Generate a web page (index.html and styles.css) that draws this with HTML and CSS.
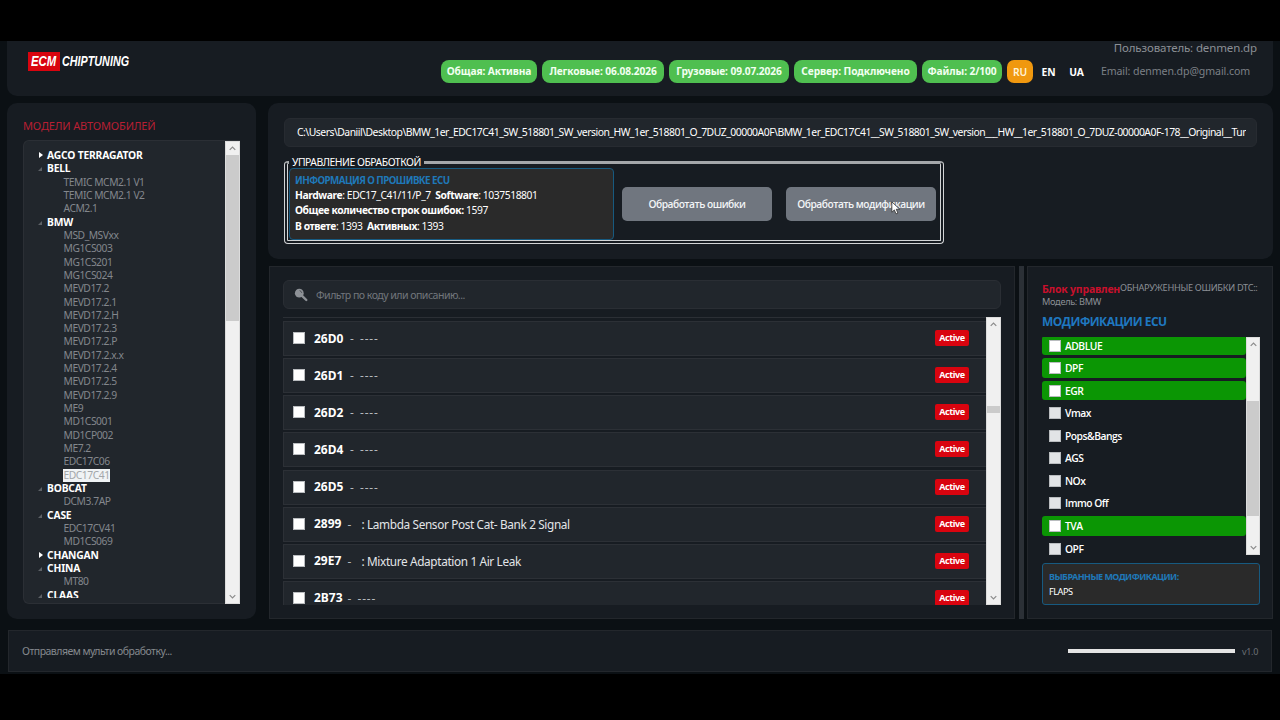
FILE: index.html
```html
<!DOCTYPE html>
<html lang="ru">
<head>
<meta charset="utf-8">
<title>ECM Chiptuning</title>
<link rel="stylesheet" href="styles.css">
</head>
<body>
<div class="app">
  <header class="header">
    <div class="logo"><span class="logo-ecm"><span>ECM</span></span><span class="logo-chip">CHIPTUNING</span></div>
    <div class="badges">
      <span class="badge b1"><span>Общая: Активна</span></span>
      <span class="badge b2"><span>Легковые: 06.08.2026</span></span>
      <span class="badge b3"><span>Грузовые: 09.07.2026</span></span>
      <span class="badge b4"><span>Сервер: Подключено</span></span>
      <span class="badge b5"><span>Файлы: 2/100</span></span>
      <span class="lang lang-on">RU</span>
      <span class="lang">EN</span>
      <span class="lang">UA</span>
    </div>
    <div class="user"><div class="user-name">Пользователь: denmen.dp</div><div class="user-mail">Email: denmen.dp@gmail.com</div></div>
  </header>
  <div class="body">
    <aside class="sidebar">
      <h2 class="side-title"><span>МОДЕЛИ АВТОМОБИЛЕЙ</span></h2>
      <div class="tree">
        <div class="tree-list">
          <div class="brand closed"><span>AGCO TERRAGATOR</span></div>
          <div class="brand"><span>BELL</span></div>
          <div class="model"><span>TEMIC MCM2.1 V1</span></div>
          <div class="model"><span>TEMIC MCM2.1 V2</span></div>
          <div class="model"><span>ACM2.1</span></div>
          <div class="brand"><span>BMW</span></div>
          <div class="model"><span>MSD_MSVxx</span></div>
          <div class="model"><span>MG1CS003</span></div>
          <div class="model"><span>MG1CS201</span></div>
          <div class="model"><span>MG1CS024</span></div>
          <div class="model"><span>MEVD17.2</span></div>
          <div class="model"><span>MEVD17.2.1</span></div>
          <div class="model"><span>MEVD17.2.H</span></div>
          <div class="model"><span>MEVD17.2.3</span></div>
          <div class="model"><span>MEVD17.2.P</span></div>
          <div class="model"><span>MEVD17.2.x.x</span></div>
          <div class="model"><span>MEVD17.2.4</span></div>
          <div class="model"><span>MEVD17.2.5</span></div>
          <div class="model"><span>MEVD17.2.9</span></div>
          <div class="model"><span>ME9</span></div>
          <div class="model"><span>MD1CS001</span></div>
          <div class="model"><span>MD1CP002</span></div>
          <div class="model"><span>ME7.2</span></div>
          <div class="model"><span>EDC17C06</span></div>
          <div class="model selected"><span>EDC17C41</span></div>
          <div class="brand"><span>BOBCAT</span></div>
          <div class="model"><span>DCM3.7AP</span></div>
          <div class="brand"><span>CASE</span></div>
          <div class="model"><span>EDC17CV41</span></div>
          <div class="model"><span>MD1CS069</span></div>
          <div class="brand closed"><span>CHANGAN</span></div>
          <div class="brand"><span>CHINA</span></div>
          <div class="model"><span>MT80</span></div>
          <div class="brand"><span>CLAAS</span></div>
        </div>
        <div class="scroll scroll-tree">
          <svg class="arrow" viewBox="0 0 14 14"><path d="M4 8.5 7 5.5 10 8.5"/></svg>
          <div class="thumb"></div>
          <svg class="arrow arrow-end" viewBox="0 0 14 14"><path d="M4 5.5 7 8.5 10 5.5"/></svg>
        </div>
      </div>
    </aside>
    <div class="content">
      <section class="control">
        <div class="path"><span>C:\Users\Daniil\Desktop\BMW_1er_EDC17C41_SW_518801_SW_version_HW_1er_518801_O_7DUZ_00000A0F\BMW_1er_EDC17C41__SW_518801_SW_version___HW__1er_518801_O_7DUZ-00000A0F-178__Original__Tun</span></div>
        <div class="group">
          <div class="group-title">УПРАВЛЕНИЕ ОБРАБОТКОЙ</div>
          <div class="ecu">
            <div class="ecu-title">ИНФОРМАЦИЯ О ПРОШИВКЕ ECU</div>
            <div class="ecu-line"><b>Hardware</b>: EDC17_C41/11/P_7 &nbsp;<b>Software</b>: 1037518801</div>
            <div class="ecu-line"><b>Общее количество строк ошибок:</b> 1597</div>
            <div class="ecu-line"><b>В ответе</b>: 1393 &nbsp;<b>Активных</b>: 1393</div>
          </div>
          <div class="btn">Обработать ошибки</div>
          <div class="btn btn-mod">Обработать модификации
            <svg class="cursor" viewBox="0 0 12 18"><path d="M1 1v12.5l3-2.8 2 4.8 2.3-1-2-4.6h4.2z"/></svg>
          </div>
        </div>
      </section>
      <div class="lower">
        <section class="errors">
          <div class="search">
            <svg class="lens" viewBox="0 0 14 14"><circle cx="5.3" cy="5.2" r="4.4"/><path d="M8.3 8.2 12.3 12"/><path class="glint" d="M6 2.7a2.5 2.5 0 0 1 1.7 1.8"/></svg>
            <span>Фильтр по коду или описанию...</span>
          </div>
          <div class="err-box">
            <div class="err-list">
              <div class="err"><i class="cb"></i><b>26D0</b><span class="dash">-&nbsp; <span class="dashes">----</span></span><em>Active</em></div>
              <div class="err"><i class="cb"></i><b>26D1</b><span class="dash">-&nbsp; <span class="dashes">----</span></span><em>Active</em></div>
              <div class="err"><i class="cb"></i><b>26D2</b><span class="dash">-&nbsp; <span class="dashes">----</span></span><em>Active</em></div>
              <div class="err"><i class="cb"></i><b>26D4</b><span class="dash">-&nbsp; <span class="dashes">----</span></span><em>Active</em></div>
              <div class="err"><i class="cb"></i><b>26D5</b><span class="dash">-&nbsp; <span class="dashes">----</span></span><em>Active</em></div>
              <div class="err"><i class="cb"></i><b class="near">2899</b><span class="dash">-</span><span class="desc">: Lambda Sensor Post Cat- Bank 2 Signal</span><em>Active</em></div>
              <div class="err"><i class="cb"></i><b class="near">29E7</b><span class="dash">-</span><span class="desc">: Mixture Adaptation 1 Air Leak</span><em>Active</em></div>
              <div class="err"><i class="cb"></i><b class="near">2B73</b><span class="dash">-&nbsp; <span class="dashes">----</span></span><em>Active</em></div>
            </div>
            <div class="scroll scroll-err">
              <svg class="arrow" viewBox="0 0 14 14"><path d="M4 8.5 7 5.5 10 8.5"/></svg>
              <div class="thumb"></div>
              <svg class="arrow arrow-end" viewBox="0 0 14 14"><path d="M4 5.5 7 8.5 10 5.5"/></svg>
            </div>
          </div>
        </section>
        <div class="splitter"></div>
        <section class="mods">
          <div class="mods-head"><div class="block">Блок управлен</div><div class="found">ОБНАРУЖЕННЫЕ ОШИБКИ DTC::</div></div>
          <div class="car">Модель: BMW</div>
          <h3 class="mods-title">МОДИФИКАЦИИ ECU</h3>
          <div class="mod-box">
            <div class="mod-list">
              <div class="mod on"><i class="cb"></i>ADBLUE</div>
              <div class="mod on"><i class="cb"></i>DPF</div>
              <div class="mod on"><i class="cb"></i>EGR</div>
              <div class="mod"><i class="cb"></i>Vmax</div>
              <div class="mod"><i class="cb"></i>Pops&amp;Bangs</div>
              <div class="mod"><i class="cb"></i>AGS</div>
              <div class="mod"><i class="cb"></i>NOx</div>
              <div class="mod"><i class="cb"></i>Immo Off</div>
              <div class="mod on"><i class="cb"></i>TVA</div>
              <div class="mod"><i class="cb"></i>OPF</div>
            </div>
            <div class="scroll scroll-mod">
              <svg class="arrow" viewBox="0 0 14 14"><path d="M4 8.5 7 5.5 10 8.5"/></svg>
              <div class="thumb"></div>
              <svg class="arrow arrow-end" viewBox="0 0 14 14"><path d="M4 5.5 7 8.5 10 5.5"/></svg>
            </div>
          </div>
          <div class="chosen"><div class="chosen-title">ВЫБРАННЫЕ МОДИФИКАЦИИ:</div><div class="chosen-val">FLAPS</div></div>
        </section>
      </div>
    </div>
  </div>
  <footer class="footer"><span class="status">Отправляем мульти обработку...</span><div class="progress"></div><span class="ver">v1.0</span></footer>
</div>
</body>
</html>
```
FILE: styles.css
```css
* { box-sizing: border-box; }
body { margin: 0; padding: 41px 0 46px; width: 1280px; height: 720px; overflow: hidden; background: #000; color: #fff; font-family: "Noto Sans", "Open Sans", sans-serif; font-size: 10.5px; white-space: nowrap; }
.app { height: 633px; background: #0b1014; display: flex; flex-direction: column; padding: 0 7px; }
h2, h3 { margin: 0; font-weight: 400; }

.header { height: 55px; background: #171c22; border-radius: 0 0 10px 10px; display: flex; position: relative; }
.logo { display: flex; margin: 11px 0 0 21px; width: 413px; height: 19px; font: italic bold 14px/19px "Liberation Sans", sans-serif; }
.logo-ecm { width: 32px; background: #d9040f; padding-left: 3px; }
.logo-ecm span { display: block; transform: scaleX(.81); transform-origin: 0 0; }
.logo-chip { padding-left: 2px; transform: scaleX(.77); transform-origin: 2px 0; }
.badges { display: flex; gap: 5px; margin-top: 19px; height: 23px; }
.badge { display: flex; align-items: center; justify-content: center; background: #4fbf50; border-radius: 8px; font-weight: 700; font-size: 10.2px; letter-spacing: -.1px; line-height: 14px; padding-bottom: 1px; color: #f2fff0; }
.b1 { width: 96px; } .b2 { width: 122px; } .b3 { width: 120px; } .b4 { width: 123px; } .b5 { width: 80px; }
.lang { font-weight: 700; font-size: 10.3px; line-height: 25px; width: 23px; text-align: center; letter-spacing: -.1px; }
.lang + .lang { margin-left: -1px; }
.lang-on + .lang { margin-right: 1px; }
.lang-on { width: 26px; background: #f0980f; border-radius: 7px; color: #fff3d8; font-weight: 600; }
.user { position: absolute; right: 16px; top: -2px; text-align: right; color: #8b8f95; }
.user-name { font-size: 11.5px; line-height: 17px; letter-spacing: -.13px; }
.user-mail { font-size: 10.6px; line-height: 16px; margin: 7px 7px 0 0; color: #7c8086; letter-spacing: -.1px; }

.body { display: flex; gap: 12px; margin-top: 7px; height: 516px; }
.sidebar { width: 249px; background: #171c22; border-radius: 10px; padding: 15px 16px 0 16px; }
.side-title { color: #b81f33; font-size: 11px; line-height: 16px; letter-spacing: -.15px; }
.tree { margin-top: 6px; height: 464px; background: #21262c; border: 1px solid #2b2f35; border-right: 0; border-radius: 6px 0 0 6px; display: flex; justify-content: space-between; }
.tree-list { height: 457px; overflow: hidden; padding-top: 7.9px; }
.brand, .model { height: 13.34px; line-height: 13.34px; font-size: 10.3px; }
.brand { font-weight: 700; padding-left: 23px; position: relative; letter-spacing: -.18px; }
.brand::before { content: ""; position: absolute; left: 14px; top: 5px; border-left: 4px solid transparent; border-bottom: 4px solid #5d6166; }
.brand.closed::before { left: 15px; top: 3px; border: 3.5px solid transparent; border-left: 4px solid #fff; border-right: 0; }
.model { padding-left: 39.5px; color: #83878c; letter-spacing: -.46px; }
.selected span { display: inline-block; height: 13px; background: #f0f3f5; color: #a3a6a9; margin-left: -1px; padding-left: 1px; }

.scroll { width: 15px; flex: none; background: #f0f0f0; border: 1px solid #dcdcdc; display: flex; flex-direction: column; }
.arrow { width: 13px; height: 13px; display: block; fill: none; stroke: #8c8c8c; stroke-width: 1.3; flex: none; }
.arrow-end { margin-top: auto; }
.thumb { background: #cbcbcb; }
.scroll-tree { height: 463px; }
.scroll-tree .thumb { height: 166px; }

.content { width: 1005px; }
.control { height: 156px; background: #171c22; border-radius: 10px; padding: 15px 16px 0; }
.path { height: 29px; background: #21262c; border: 1px solid #272b31; border-radius: 6px; padding: 0 10px 0 12px; line-height: 27px; font-size: 10.4px; letter-spacing: -.5px; }
.path span { display: block; overflow: hidden; }
.group { position: relative; margin-top: 14px; width: 660px; height: 83px; border: 4px double #d2d4d6; border-top: 3px solid #a4a7aa; border-radius: 4px; display: flex; align-items: flex-start; }
.group-title { position: absolute; left: 1px; top: -8px; width: 135px; padding-left: 3px; line-height: 12px; font-size: 10.4px; letter-spacing: -.48px; background: #171c22; }
.ecu { position: relative; margin: 4px 0 0 1px; width: 325px; height: 72px; background: #2a2a2a; border: 1px solid #175a80; border-radius: 4px; padding: 4px 5px; }
.ecu-title { color: #1f78b8; font-weight: 700; font-size: 9.8px; line-height: 15px; letter-spacing: -.56px; }
.ecu-line { font-size: 10.3px; line-height: 15.3px; letter-spacing: -.41px; }
.btn { width: 150px; height: 34px; margin: 23px 0 0 8px; border-radius: 5px; background: #70767f; font: 600 10.2px/34px "Open Sans", sans-serif; letter-spacing: -.5px; color: #f2f4f6; text-align: center; position: relative; }
.btn-mod { margin-left: 14px; }
.cursor { position: absolute; left: 105px; top: 14px; width: 10px; height: 15px; fill: #fff; stroke: #333; stroke-width: 1; }

.lower { display: flex; margin: 7px 0 0 1px; height: 353px; }
.errors { width: 746px; background: #171c22; border: 1px solid #23272c; padding: 13px; }
.search { height: 29px; width: 718px; background: #21262c; border: 1px solid #2a2e34; border-radius: 6px; display: flex; align-items: center; padding-left: 10px; gap: 8px; color: #72767c; font-size: 10.6px; letter-spacing: -.54px; }
.lens { width: 14px; height: 14px; fill: #8d9196; stroke: #8d9196; stroke-width: 2.4; stroke-linecap: round; }
.lens circle { stroke-width: 0; }
.lens .glint { stroke: #4d5157; stroke-width: 1; fill: none; }
.err-box { display: flex; width: 718px; height: 288px; margin-top: 8px; overflow: hidden; }
.err-list { flex: 1; border-top: 1px solid #2b2f35; padding-top: 3px; display: flex; flex-direction: column; gap: 2.15px; overflow: hidden; }
.err { flex: none; height: 35px; background: #21262c; border: 1px solid #2c3036; border-right: 0; display: flex; align-items: center; padding: 0 17px 1px 9px; font-size: 11.8px; }
.err b { font-size: 12px; width: 36px; }
.err .near { width: 33.5px; }
.dash { color: #b4b8bc; width: 11px; }
.near + .dash { width: 14px; }
.dashes { letter-spacing: .9px; }
.desc { color: #e3e5e8; font-size: 11.8px; letter-spacing: -.36px; }
.err em { margin-left: auto; width: 34px; height: 16px; border-radius: 2px; background: #d9040f; font: bold 9px/15px "Noto Sans", sans-serif; letter-spacing: -.4px; text-align: center; }
.cb { width: 12px; height: 12px; flex: none; background: #fff; border: 1px solid #b9bcbf; }
.err .cb { margin-right: 9px; }
.scroll-err .thumb { margin-top: 75px; height: 7px; }
.splitter { width: 5px; margin: 0 3px 0 4px; background: #2b3036; }
.mods { width: 246px; background: #171c22; border: 1px solid #23272c; padding: 14px 13px 0 14px; }
.mods-head { display: flex; height: 14px; line-height: 14px; }
.block { width: 78px; overflow: hidden; color: #c8102c; font-weight: 700; font-size: 10.5px; line-height: 16px; height: 16px; letter-spacing: -.2px; }
.found { color: #8b8f95; font-size: 9.2px; letter-spacing: -.3px; }
.car { color: #8b8f95; font-size: 9.2px; line-height: 14px; letter-spacing: -.3px; }
.mods-title { color: #1f78c0; font-weight: 700; font-size: 12px; line-height: 18px; margin-top: 4px; font-family: "Open Sans", sans-serif; letter-spacing: -.5px; }
.mod-box { display: flex; height: 218px; margin-top: 6px; }
.mod-list { width: 204px; flex: none; overflow: hidden; display: flex; flex-direction: column; gap: 3px; }
.mod { flex: none; height: 19.55px; border-radius: 3px; display: flex; align-items: center; gap: 4px; padding-left: 7px; font: 600 10.3px "Open Sans", sans-serif; letter-spacing: -.5px; }
.mod:first-child { margin-top: -1.2px; }
.mod.on { background: #0b9604; }
.mod:not(.on) .cb { background: #e2e4e6; }
.scroll-mod { width: 14px; }
.scroll-mod .thumb { margin-top: 50px; height: 115px; }
.chosen { width: 218px; height: 42px; margin-top: 8px; background: #2a2a2a; border: 1px solid #175a80; border-radius: 3px; padding: 5px 6px; }
.chosen-title { color: #1f78b8; font-weight: 700; font-size: 9px; line-height: 15px; letter-spacing: -.56px; }
.chosen-val { font-size: 9.2px; line-height: 15px; letter-spacing: -.5px; }

.footer { height: 42px; margin: 11px 1px 0; background: #171c22; border: 1px solid #23272c; display: flex; align-items: center; padding: 0 13px; color: #85898e; font-size: 10.5px; }
.status { letter-spacing: -.52px; }
.progress { width: 167px; height: 4px; background: #e4e4e4; margin-left: auto; }
.ver { width: 23px; text-align: right; font-size: 9px; letter-spacing: -.3px; color: #6c7076; }
```
